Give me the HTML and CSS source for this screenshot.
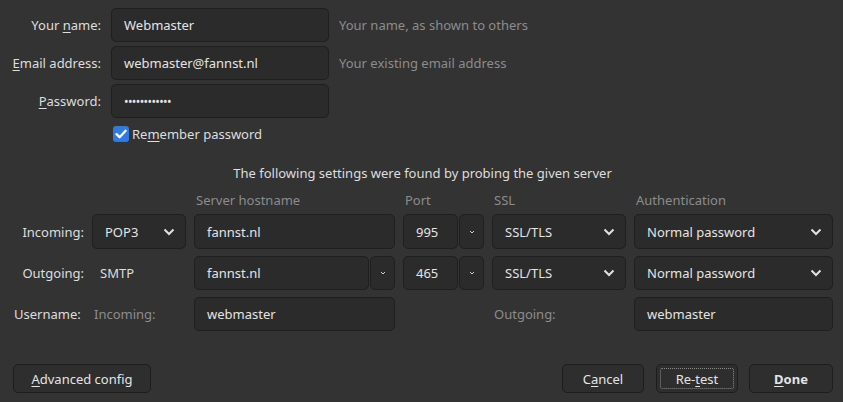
FILE: index.html
```html
<!DOCTYPE html>
<html lang="en">
<head>
<meta charset="utf-8">
<link rel="stylesheet" href="styles.css">
</head>
<body>
<div class="dialog">
  <div class="identity">
    <label class="lbl">Your <u>n</u>ame:</label>
    <div class="field">Webmaster</div>
    <span class="hint">Your name, as shown to others</span>

    <label class="lbl"><u>E</u>mail address:</label>
    <div class="field">webmaster@fannst.nl</div>
    <span class="hint">Your existing email address</span>

    <label class="lbl"><u>P</u>assword:</label>
    <div class="field pw">••••••••••••</div>
    <span></span>

    <span></span>
    <div class="remember">
      <span class="check"><svg viewBox="0 0 16 16" width="16" height="16"><path d="M3.5 8.2 L6.6 11.2 L12.6 4.8" fill="none" stroke="#fff" stroke-width="2.4" stroke-linecap="round" stroke-linejoin="round"/></svg></span>
      <span>Re<u>m</u>ember password</span>
    </div>
  </div>

  <p class="found">The following settings were found by probing the given server</p>

  <div class="servers">
    <span></span>
    <span></span>
    <span class="head">Server hostname</span>
    <span class="head">Port</span>
    <span class="head">SSL</span>
    <span class="head">Authentication</span>

    <span class="rlbl">Incoming:</span>
    <div class="select">POP3<svg class="chev" viewBox="0 0 12 8" width="12" height="8"><path d="M1.5 1.5 L6 6 L10.5 1.5" fill="none" stroke="#e0e0e0" stroke-width="2"/></svg></div>
    <div class="field">fannst.nl</div>
    <div class="combo"><div class="field">995</div><div class="drop"><svg viewBox="0 0 6 4" width="6" height="4"><path d="M1 1 L3 3 L5 1" fill="none" stroke="#cfcfcf" stroke-width="1"/></svg></div></div>
    <div class="select">SSL/TLS<svg class="chev" viewBox="0 0 12 8" width="12" height="8"><path d="M1.5 1.5 L6 6 L10.5 1.5" fill="none" stroke="#e0e0e0" stroke-width="2"/></svg></div>
    <div class="select">Normal password<svg class="chev" viewBox="0 0 12 8" width="12" height="8"><path d="M1.5 1.5 L6 6 L10.5 1.5" fill="none" stroke="#e0e0e0" stroke-width="2"/></svg></div>

    <span class="rlbl">Outgoing:</span>
    <span class="plain">SMTP</span>
    <div class="combo"><div class="field">fannst.nl</div><div class="drop"><svg viewBox="0 0 6 4" width="6" height="4"><path d="M1 1 L3 3 L5 1" fill="none" stroke="#cfcfcf" stroke-width="1"/></svg></div></div>
    <div class="combo"><div class="field">465</div><div class="drop"><svg viewBox="0 0 6 4" width="6" height="4"><path d="M1 1 L3 3 L5 1" fill="none" stroke="#cfcfcf" stroke-width="1"/></svg></div></div>
    <div class="select">SSL/TLS<svg class="chev" viewBox="0 0 12 8" width="12" height="8"><path d="M1.5 1.5 L6 6 L10.5 1.5" fill="none" stroke="#e0e0e0" stroke-width="2"/></svg></div>
    <div class="select">Normal password<svg class="chev" viewBox="0 0 12 8" width="12" height="8"><path d="M1.5 1.5 L6 6 L10.5 1.5" fill="none" stroke="#e0e0e0" stroke-width="2"/></svg></div>

    <span class="rlbl user">Username:</span>
    <span class="dim">Incoming:</span>
    <div class="field">webmaster</div>
    <span></span>
    <span class="dim">Outgoing:</span>
    <div class="field">webmaster</div>
  </div>

  <div class="buttons">
    <button class="btn adv"><u>A</u>dvanced config</button>
    <span class="spacer"></span>
    <button class="btn cancel">C<u>a</u>ncel</button>
    <button class="btn retest"><span class="focus">Re-<u>t</u>est</span></button>
    <button class="btn done"><u>D</u>one</button>
  </div>
</div>
</body>
</html>
```

FILE: styles.css
```css
* { box-sizing: border-box; }
html, body {
  margin: 0;
  padding: 0;
  background: #333333;
  width: 843px;
  height: 402px;
  overflow: hidden;
}
body {
  font-family: "Noto Sans", "Open Sans", sans-serif;
  font-size: 13px;
  color: #dedede;
}
u { text-decoration-thickness: 1px; text-underline-offset: 2px; }

.dialog {
  padding-top: 8px;
  display: flex;
  flex-direction: column;
}

.identity {
  display: grid;
  grid-template-columns: 101px 218px auto;
  column-gap: 10px;
  row-gap: 4px;
  align-items: center;
}
.lbl { text-align: right; }
.field {
  height: 34px;
  background: #2b2b2b;
  border: 1px solid #1f1f1f;
  border-radius: 5px;
  padding: 0 12px;
  display: flex;
  align-items: center;
  color: #e4e4e4;
  white-space: nowrap;
  overflow: hidden;
}
.field.pw { letter-spacing: -0.6px; font-size: 12px; }
.hint { color: #8c8c8c; }

.remember {
  display: flex;
  align-items: center;
  gap: 3px;
  height: 24px;
  margin-left: 2px;
}
.check {
  width: 16px;
  height: 16px;
  border-radius: 3px;
  background: #2f7ae0;
  display: flex;
}

.found {
  margin: 18px 0 0;
  text-align: center;
  padding-left: 2px;
  height: 18px;
  line-height: 18px;
}

.servers {
  margin-top: 11px;
  display: grid;
  grid-template-columns: 84px 94px 201px 81px 134px 199px;
  column-gap: 8px;
  row-gap: 7px;
  grid-template-rows: 14px 35px 34px 34px;
  align-items: center;
}
.servers > .head { margin-bottom: 1px; }
.head { color: #8c8c8c; padding-left: 2px; line-height: 14px; }
.rlbl { text-align: right; }
.rlbl.user { text-align: left; padding-left: 14px; margin-right: -20px; }
.plain { padding-left: 8px; }
.dim { color: #8c8c8c; padding-left: 2px; }
.servers .field { height: 100%; }
.servers > .select { height: 100%; }

.select {
  background: #2b2b2b;
  border: 1px solid #1f1f1f;
  border-radius: 5px;
  padding: 0 10px 0 12px;
  display: flex;
  align-items: center;
  justify-content: space-between;
  color: #e4e4e4;
}
.combo {
  display: flex;
  gap: 1px;
  height: 100%;
}
.combo .field { flex: 1; min-width: 0; }
.drop {
  width: 25px;
  flex: none;
  background: #2b2b2b;
  border: 1px solid #1f1f1f;
  border-radius: 5px;
  display: flex;
  align-items: center;
  justify-content: center;
}

.buttons {
  margin-top: 33px;
  display: flex;
  align-items: center;
  padding: 0 10px 0 13px;
}
.spacer { flex: 1; }
.btn {
  font-family: inherit;
  font-size: 13px;
  color: #e4e4e4;
  height: 29px;
  background: #2e2e2e;
  border: 1px solid #1d1d1d;
  border-radius: 5px;
  padding: 0;
}
.adv { width: 138px; }
.cancel { width: 82px; }
.retest { width: 82px; margin-left: 12px; padding: 3px; }
.done { width: 84px; margin-left: 11px; font-weight: bold; }
.focus {
  display: flex;
  align-items: center;
  justify-content: center;
  height: 100%;
  border: 1px dotted #8a8a8a;
  border-radius: 2px;
}
```
